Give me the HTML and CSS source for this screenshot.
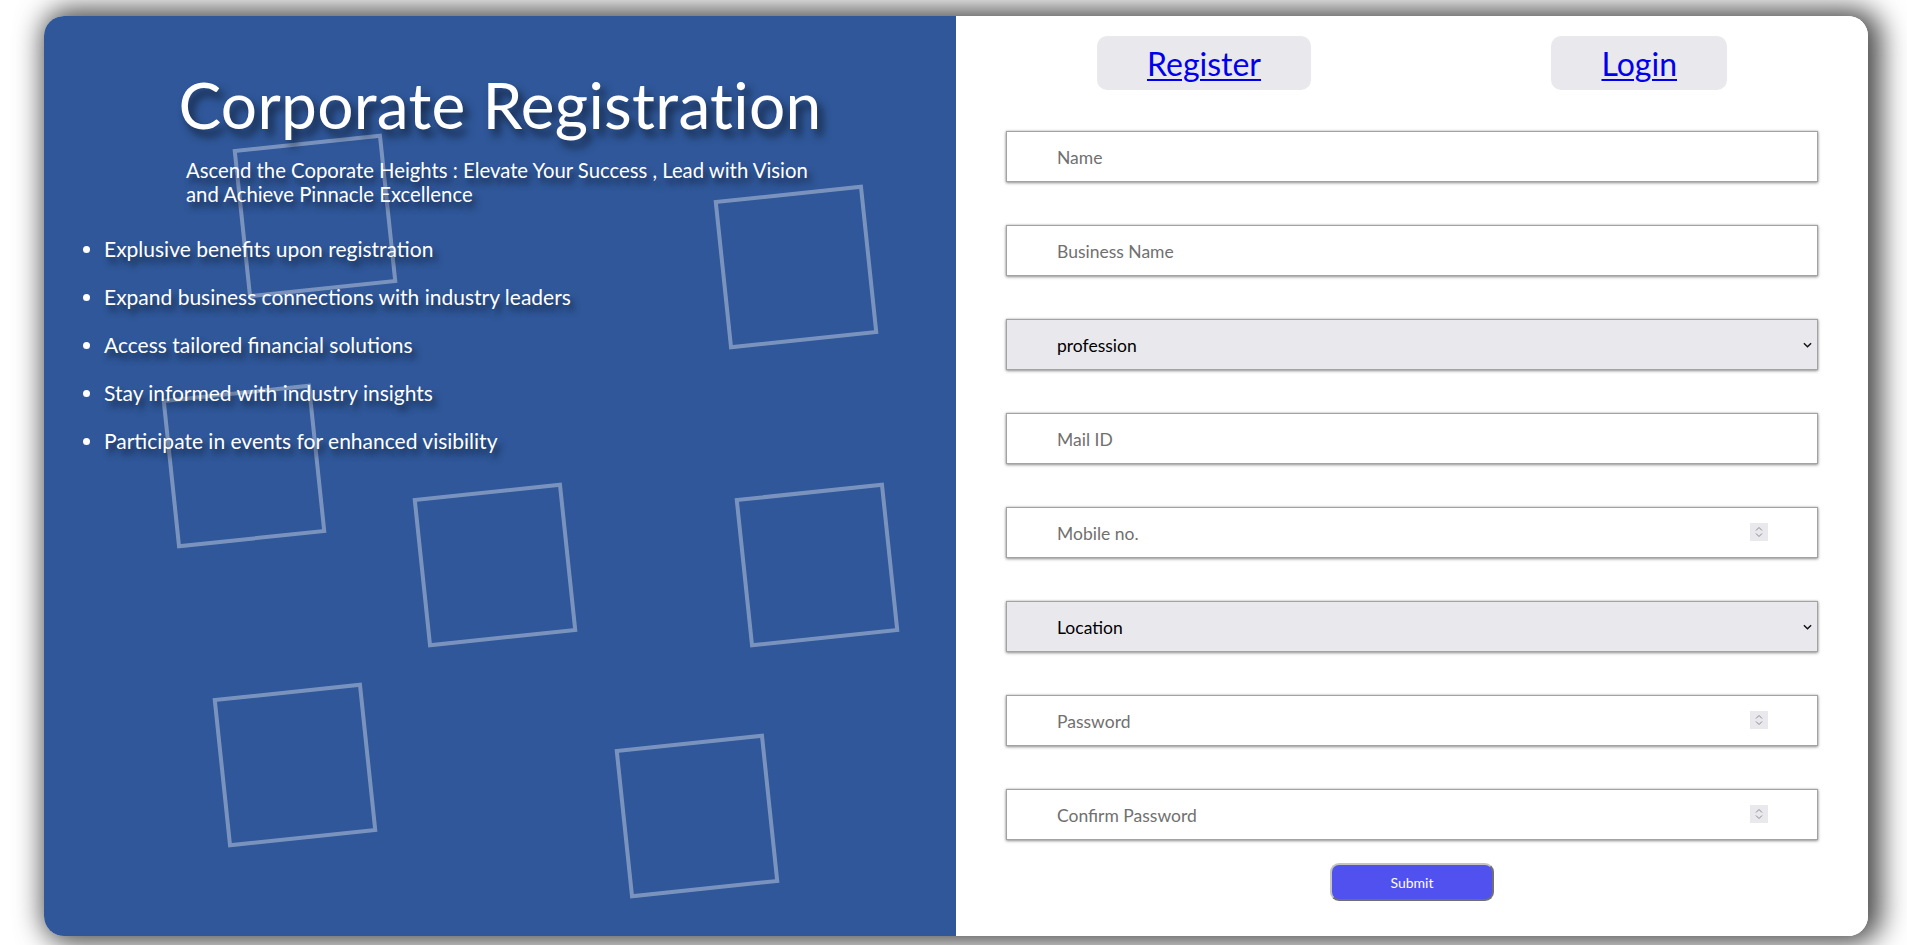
FILE: index.html
```html
<!DOCTYPE html>
<html lang="en">
<head>
<meta charset="utf-8">
<title>Corporate Registration</title>
<link rel="stylesheet" href="styles.css">
</head>
<body>
<div class="page">
  <div class="card">
    <section class="intro">
      <div class="shapes" aria-hidden="true">
        <span class="sq sq1"></span>
        <span class="sq sq2"></span>
        <span class="sq sq3"></span>
        <span class="sq sq4"></span>
        <span class="sq sq5"></span>
        <span class="sq sq6"></span>
        <span class="sq sq7"></span>
      </div>
      <h1 class="title">Corporate Registration</h1>
      <p class="tagline">Ascend the Coporate Heights : Elevate Your Success , Lead with Vision and Achieve Pinnacle Excellence</p>
      <ul class="perks">
        <li>Explusive benefits upon registration</li>
        <li>Expand business connections with industry leaders</li>
        <li>Access tailored financial solutions</li>
        <li>Stay informed with industry insights</li>
        <li>Participate in events for enhanced visibility</li>
      </ul>
    </section>
    <section class="signup">
      <nav class="tabs">
        <a class="tab" href="#">Register</a>
        <a class="tab" href="#">Login</a>
      </nav>
      <form class="form" onsubmit="return false">
        <div class="fields">
          <div class="field"><input class="control" type="text" placeholder="Name"></div>
          <div class="field"><input class="control" type="text" placeholder="Business Name"></div>
          <div class="field">
            <select class="control select"><option>profession</option></select>
            <svg class="chev" viewBox="0 0 10 6"><path d="M1 1l4 4 4-4" fill="none" stroke="#111" stroke-width="1.6"/></svg>
          </div>
          <div class="field"><input class="control" type="text" placeholder="Mail ID"></div>
          <div class="field">
            <input class="control" type="text" placeholder="Mobile no.">
            <span class="spin"><svg viewBox="0 0 18 18"><path d="M6 7.5l3-3 3 3M6 10.5l3 3 3-3" fill="none" stroke="#8a8a8a" stroke-width="1"/></svg></span>
          </div>
          <div class="field">
            <select class="control select"><option>Location</option></select>
            <svg class="chev" viewBox="0 0 10 6"><path d="M1 1l4 4 4-4" fill="none" stroke="#111" stroke-width="1.6"/></svg>
          </div>
          <div class="field">
            <input class="control" type="text" placeholder="Password">
            <span class="spin"><svg viewBox="0 0 18 18"><path d="M6 7.5l3-3 3 3M6 10.5l3 3 3-3" fill="none" stroke="#8a8a8a" stroke-width="1"/></svg></span>
          </div>
          <div class="field">
            <input class="control" type="text" placeholder="Confirm Password">
            <span class="spin"><svg viewBox="0 0 18 18"><path d="M6 7.5l3-3 3 3M6 10.5l3 3 3-3" fill="none" stroke="#8a8a8a" stroke-width="1"/></svg></span>
          </div>
        </div>
        <button class="submit" type="submit">Submit</button>
      </form>
    </section>
  </div>
</div>
</body>
</html>
```
FILE: styles.css
```css
html, body {
  margin: 0;
  padding: 0;
  background: #fff;
}

body {
  font-family: Lato, "Noto Sans", sans-serif;
}

.page {
  padding: 16px 39px 9px 44px;
}

.card {
  display: grid;
  grid-template-columns: 1fr 1fr;
  height: 920px;
  border-radius: 20px;
  overflow: hidden;
  box-shadow: 6px 0 28px 7px rgba(0, 0, 0, 0.72);
}

/* ---------- left intro panel ---------- */
.intro {
  position: relative;
  background: #2f5799;
  color: #fff;
  overflow: hidden;
}

.shapes {
  position: absolute;
  inset: 0;
}

.sq {
  position: absolute;
  width: 150px;
  height: 150px;
  box-sizing: border-box;
  border: 4px solid rgba(255, 255, 255, 0.36);
  transform: rotate(-6deg);
}

.sq1 { left: 196px; top: 125px; }
.sq2 { left: 677px; top: 176px; }
.sq3 { left: 125px; top: 375px; }
.sq4 { left: 376px; top: 474px; }
.sq5 { left: 698px; top: 474px; }
.sq6 { left: 176px; top: 674px; }
.sq7 { left: 578px; top: 725px; }

.title,
.tagline,
.perks {
  position: relative;
}

.title {
  margin: 53px 0 0;
  text-align: center;
  font-size: 64px;
  font-weight: 400;
  line-height: 72px;
  letter-spacing: 0.3px;
  text-shadow: 5px 7px 9px rgba(0, 0, 0, 0.6);
}

.tagline {
  width: 650px;
  margin: 17px 0 0 142px;
  font-size: 20.3px;
  line-height: 24px;
  text-shadow: 4px 6px 6px rgba(0, 0, 0, 0.55);
}

.perks {
  margin: 31px 0 0;
  padding-left: 60px;
  list-style: disc;
  font-size: 21px;
  line-height: 24px;
}

.perks li {
  margin-bottom: 24px;
  text-shadow: 4px 6px 6px rgba(0, 0, 0, 0.55);
}

/* ---------- right signup panel ---------- */
.signup {
  background: #fff;
  padding: 20px 50px 0;
  display: flex;
  flex-direction: column;
}

.tabs {
  display: flex;
  justify-content: space-between;
  padding: 0 91px;
}

.tab {
  height: 54px;
  padding: 0 50px;
  display: flex;
  align-items: center;
  background: #e9e9ed;
  border-radius: 10px;
  color: #0000ee;
  text-decoration: underline;
  text-decoration-thickness: 2px;
  text-underline-offset: 3px;
  font-size: 32px;
}

.form {
  display: flex;
  flex-direction: column;
  margin-top: 41px;
}

.fields {
  display: flex;
  flex-direction: column;
  gap: 43px;
}

.field {
  position: relative;
  height: 51px;
}

.control {
  display: block;
  width: 100%;
  height: 51px;
  box-sizing: border-box;
  padding: 1px 50px 0;
  border: 1px solid #a3a3a3;
  border-radius: 0;
  box-shadow: 0 1px 3px rgba(0, 0, 0, 0.4), 0 0 2px rgba(0, 0, 0, 0.2);
  background: #fff;
  color: #000;
  font-family: Lato, "Noto Sans", sans-serif;
  font-size: 17.5px;
  outline: none;
}

.control::placeholder {
  color: #707070;
  opacity: 1;
}

.select {
  appearance: none;
  -webkit-appearance: none;
  background: #e9e9ed;
}

.chev {
  position: absolute;
  right: 6px;
  top: 23px;
  width: 9px;
  height: 6px;
  pointer-events: none;
}

.spin {
  position: absolute;
  right: 50px;
  top: 16px;
  width: 18px;
  height: 18px;
  background: #e9e9ed;
  display: flex;
  pointer-events: none;
}

.spin svg {
  width: 18px;
  height: 18px;
}

.submit {
  align-self: center;
  width: 164px;
  height: 38px;
  margin-top: 23px;
  background: #5151f0;
  color: #fff;
  border: 2px outset #c4c4c4;
  border-radius: 9px;
  font-family: Lato, "Noto Sans", sans-serif;
  font-size: 14px;
  cursor: pointer;
}
```
